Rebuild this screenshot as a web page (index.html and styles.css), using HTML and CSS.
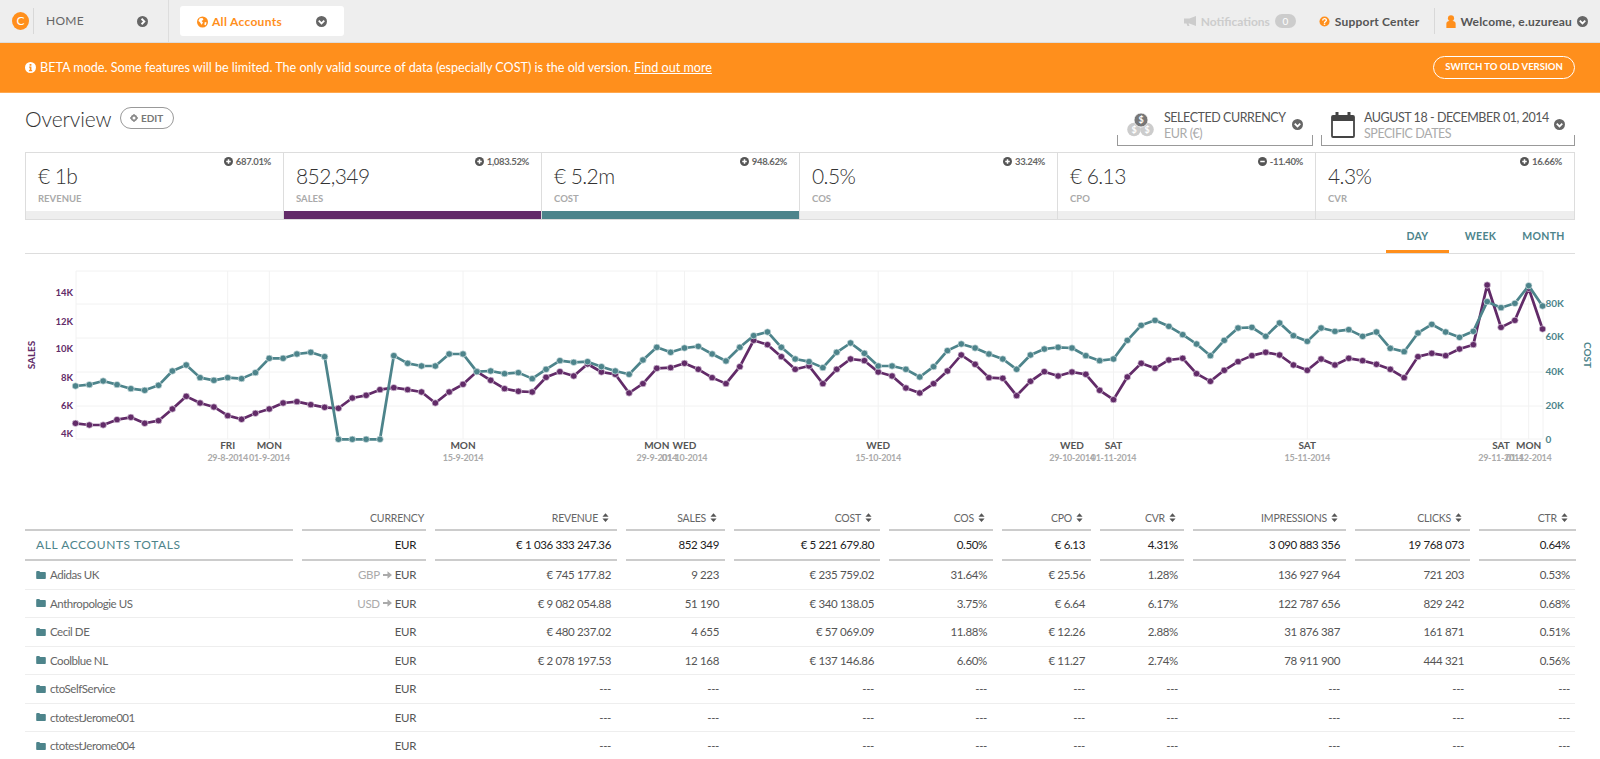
FILE: index.html
```html
<!DOCTYPE html>
<html lang="en">
<head>
<meta charset="utf-8">
<title>Overview</title>
<link rel="stylesheet" href="styles.css">
</head>
<body>
<svg class="defs" aria-hidden="true">
  <symbol id="i-down" viewBox="0 0 12 12"><circle cx="6" cy="6" r="6"/><path d="M3 5l3 3 3-3" fill="none" stroke="#fff" stroke-width="2"/></symbol>
  <symbol id="i-right" viewBox="0 0 12 12"><circle cx="6" cy="6" r="6"/><path d="M5 3l3 3-3 3" fill="none" stroke="#fff" stroke-width="2"/></symbol>
  <symbol id="i-plus" viewBox="0 0 12 12"><circle cx="6" cy="6" r="6"/><path d="M6 3v6M3 6h6" stroke="#fff" stroke-width="2"/></symbol>
  <symbol id="i-minus" viewBox="0 0 12 12"><circle cx="6" cy="6" r="6"/><path d="M3 6h6" stroke="#fff" stroke-width="2"/></symbol>
  <symbol id="i-folder" viewBox="0 0 12 10"><path d="M0 1.2C0 .5.5 0 1.2 0h2.600l1.200 1.400h5.800c.6 0 1.200.5 1.200 1.200v6.200c0 .7-.6 1.200-1.200 1.200H1.200C.5 10 0 9.500 0 8.800z"/></symbol>
  <symbol id="i-sort" viewBox="0 0 8 10"><path d="M4 0l3.500 4H.5zM4 10L.5 6h7z"/></symbol>
  <symbol id="i-arrow" viewBox="0 0 12 10"><path d="M0 3.800h6V0l6 5-6 5V6.200H0z"/></symbol>
</svg>

<header class="topbar">
  <div class="home">
    <span class="logo">C</span>
    <span class="home-label">HOME</span>
    <svg class="ic ic-chev"><use href="#i-right"/></svg>
  </div>
  <div class="tab">
    <svg class="ic ic-globe" viewBox="0 0 12 12"><circle cx="6" cy="6" r="6"/><path d="M3 2l3-.5 1 2-2 1.500 1.500 1.500L5 9 3 6 1.500 5zM8.500 6l2 .5L9.500 9.500 8 9z" fill="#fff"/></svg>
    <span class="tab-label">All Accounts</span>
    <svg class="ic ic-chev"><use href="#i-down"/></svg>
  </div>
  <nav class="user-nav">
    <svg class="ic ic-horn" viewBox="0 0 12 10"><path d="M12 0v10L5.500 7.500H4.500L5.500 10H3.500L2.500 7.500H0v-5h5.500z"/></svg>
    <span class="notif">Notifications</span>
    <span class="badge">0</span>
    <svg class="ic ic-help" viewBox="0 0 12 12"><circle cx="6" cy="6" r="5.500"/><path d="M4 4.800c0-2.600 4-2.600 4-.3 0 1.500-2 1.500-2 3" fill="none" stroke="#fff" stroke-width="1.500"/><path d="M5.200 8.200h1.600v1.500H5.200z" fill="#fff"/></svg>
    <span class="nav-text support">Support Center</span>
    <span class="nav-sep"></span>
    <svg class="ic ic-user" viewBox="0 0 10 14"><circle cx="5" cy="3.500" r="3.300"/><path d="M0 14V9.500C0 7.500 1.500 6.500 3 6.500h4c1.500 0 3 1 3 3V14z"/></svg>
    <span class="nav-text">Welcome, e.uzureau</span>
    <svg class="ic ic-chev"><use href="#i-down"/></svg>
  </nav>
</header>

<section class="banner">
  <p class="banner-text"><svg class="ic-info" viewBox="0 0 12 12"><circle cx="6" cy="6" r="6"/><path d="M5 2.200h2v1.800H5zM4.500 5h2.500v3.800h.8V10H4.300V8.800h.9V6.200h-.7z" fill="#ff8f1c"/></svg>BETA mode. Some features will be limited. The only valid source of data (especially COST) is the old version. <a href="#">Find out more</a></p>
  <a class="switch-btn" href="#">SWITCH TO OLD VERSION</a>
</section>

<section class="title-row">
  <div class="title-left">
    <h1>Overview</h1>
    <button class="edit-btn"><svg class="ic ic-cog" viewBox="0 0 12 12"><circle cx="6" cy="6" r="3.500" fill="none" stroke="#8a8a8a" stroke-width="2.500"/><path d="M5 0h2v2.500H5zM5 9.500h2V12H5zM0 5h2.500v2H0zM9.500 5H12v2H9.500z" fill="#8a8a8a"/></svg>EDIT</button>
  </div>
  <div class="pickers">
    <div class="picker picker-cur">
      <svg class="picker-icon coins" viewBox="0 0 28 24"><circle cx="7" cy="16.500" r="6.800" fill="#ccc"/><circle cx="20" cy="16.500" r="6.800" fill="#ccc"/><circle cx="14" cy="7" r="7" fill="#777" stroke="#fff" stroke-width=".8"/><text x="14" y="10.200" class="coin-t">$</text><text x="7" y="20" class="coin-t">$</text><text x="20" y="20" class="coin-t">$</text></svg>
      <div class="picker-text"><span class="picker-main">SELECTED CURRENCY</span><span class="picker-sub">EUR (€)</span></div>
      <svg class="ic ic-chev"><use href="#i-down"/></svg>
    </div>
    <div class="picker picker-date">
      <svg class="picker-icon cal" viewBox="0 0 24 26"><rect x="1" y="4" width="22" height="21" rx="1" fill="none" stroke="#444" stroke-width="1.800"/><path d="M1 4h22v5H1zM4.500 0h3v5h-3zM16.500 0h3v5h-3z" fill="#444"/></svg>
      <div class="picker-text"><span class="picker-main">AUGUST 18 - DECEMBER 01, 2014</span><span class="picker-sub">SPECIFIC DATES</span></div>
      <svg class="ic ic-chev"><use href="#i-down"/></svg>
    </div>
  </div>
</section>

<section class="kpis">
  <div class="kpi">
    <div class="delta"><svg class="ic ic-delta"><use href="#i-plus"/></svg>687.01%</div>
    <div class="kpi-val">€ 1b</div><div class="kpi-label">REVENUE</div><div class="kpi-bar"></div>
  </div>
  <div class="kpi">
    <div class="delta"><svg class="ic ic-delta"><use href="#i-plus"/></svg>1,083.52%</div>
    <div class="kpi-val">852,349</div><div class="kpi-label">SALES</div><div class="kpi-bar bar-sales"></div>
  </div>
  <div class="kpi">
    <div class="delta"><svg class="ic ic-delta"><use href="#i-plus"/></svg>948.62%</div>
    <div class="kpi-val">€ 5.2m</div><div class="kpi-label">COST</div><div class="kpi-bar bar-cost"></div>
  </div>
  <div class="kpi">
    <div class="delta"><svg class="ic ic-delta"><use href="#i-plus"/></svg>33.24%</div>
    <div class="kpi-val">0.5%</div><div class="kpi-label">COS</div><div class="kpi-bar"></div>
  </div>
  <div class="kpi">
    <div class="delta"><svg class="ic ic-delta"><use href="#i-minus"/></svg>-11.40%</div>
    <div class="kpi-val">€ 6.13</div><div class="kpi-label">CPO</div><div class="kpi-bar"></div>
  </div>
  <div class="kpi">
    <div class="delta"><svg class="ic ic-delta"><use href="#i-plus"/></svg>16.66%</div>
    <div class="kpi-val">4.3%</div><div class="kpi-label">CVR</div><div class="kpi-bar"></div>
  </div>
</section>

<section class="tabs">
  <span class="period active">DAY</span><span class="period">WEEK</span><span class="period">MONTH</span>
</section>

<svg class="chart" viewBox="0 254 1600 246">
  <defs>
    <marker id="dot-p" viewBox="0 0 10 10" refX="5" refY="5" markerWidth="3" markerHeight="3"><circle cx="5" cy="5" r="4" fill="#622b68" stroke="#e6dcea" stroke-width=".8"/></marker>
    <marker id="dot-t" viewBox="0 0 10 10" refX="5" refY="5" markerWidth="3" markerHeight="3"><circle cx="5" cy="5" r="4" fill="#4d848b" stroke="#dfeaeb" stroke-width=".8"/></marker>
  </defs>
  <path class="grid" d="M76 271H1543M76 304H1543M76 338H1543M76 372H1543M76 406H1543M76 439H1543M76 271V439M1543 271V439M227.700 271V439M269.300 271V439M463 271V439M656.800 271V439M684.500 271V439M878.200 271V439M1072 271V439M1113.500 271V439M1307.300 271V439M1501 271V439M1528.700 271V439"/>
  <g class="axis-l">
    <text x="73" y="295.500">14K</text><text x="73" y="324.500">12K</text><text x="73" y="352">10K</text><text x="73" y="380.500">8K</text><text x="73" y="408.500">6K</text><text x="73" y="436.500">4K</text>
  </g>
  <g class="axis-r">
    <text x="1545.500" y="306.500">80K</text><text x="1545.500" y="340">60K</text><text x="1545.500" y="374.500">40K</text><text x="1545.500" y="408.500">20K</text><text x="1545.500" y="442.500">0</text>
  </g>
  <text class="axis-title sales" transform="translate(34.500 355) rotate(-90)">SALES</text>
  <text class="axis-title cost" transform="translate(1584 355) rotate(90)">COST</text>
  <g class="xday">
    <text x="227.700" y="448.500">FRI</text><text x="269.300" y="448.500">MON</text><text x="463" y="448.500">MON</text><text x="656.800" y="448.500">MON</text><text x="684.500" y="448.500">WED</text><text x="878.200" y="448.500">WED</text><text x="1072" y="448.500">WED</text><text x="1113.500" y="448.500">SAT</text><text x="1307.300" y="448.500">SAT</text><text x="1501" y="448.500">SAT</text><text x="1528.700" y="448.500">MON</text>
  </g>
  <g class="xdate">
    <text x="227.700" y="460.500">29-8-2014</text><text x="269.300" y="460.500">01-9-2014</text><text x="463" y="460.500">15-9-2014</text><text x="656.800" y="460.500">29-9-2014</text><text x="684.500" y="460.500">01-10-2014</text><text x="878.200" y="460.500">15-10-2014</text><text x="1072" y="460.500">29-10-2014</text><text x="1113.500" y="460.500">01-11-2014</text><text x="1307.300" y="460.500">15-11-2014</text><text x="1501" y="460.500">29-11-2014</text><text x="1528.700" y="460.500">01-12-2014</text>
  </g>
  <g transform="translate(75.500 260) scale(.346 .3333)">
    <polyline class="line line-sales" points="0,490 40,495 80,495 120,479 160,472 200,490 240,482 280,447 320,409 360,429 400,441 440,467 480,478 520,460 560,447 600,429 640,425 680,434 720,442 760,445 800,414 840,406 880,389 920,383 960,389 1000,396 1040,429 1080,396 1120,373 1160,335 1200,361 1240,386 1280,394 1320,396 1360,352 1400,335 1440,348 1480,312 1520,336 1560,343 1600,399 1640,371 1680,325 1720,323 1760,310 1800,328 1840,353 1880,371 1920,320 1960,241 2000,254 2040,290 2080,328 2120,318 2160,371 2200,328 2240,297 2280,302 2320,336 2360,348 2400,384 2440,399 2480,371 2520,333 2560,285 2600,313 2640,353 2680,355 2720,407 2760,364 2800,335 2840,348 2880,336 2920,343 2960,391 3000,419 3040,351 3080,310 3120,325 3160,300 3200,295 3240,341 3280,364 3320,331 3360,305 3400,287 3440,277 3480,285 3520,315 3560,331 3600,297 3640,315 3680,295 3720,302 3760,313 3800,328 3840,353 3880,290 3920,280 3960,287 4000,267 4040,254 4080,75 4120,202 4160,181 4200,85 4240,207"/>
    <polyline class="line line-cost" points="0,378 40,374 80,363 120,374 160,386 200,391 240,376 280,333 320,315 360,353 400,361 440,353 480,356 520,338 560,295 600,295 640,282 680,277 720,290 760,538 800,538 840,538 880,538 920,287 960,310 1000,318 1040,318 1080,282 1120,282 1160,335 1200,333 1240,341 1280,338 1320,356 1360,328 1400,302 1440,307 1480,305 1520,320 1560,333 1600,343 1640,300 1680,262 1720,277 1760,264 1800,259 1840,282 1880,303 1920,262 1960,227 2000,216 2040,262 2080,297 2120,305 2160,323 2200,277 2240,249 2280,280 2320,318 2360,318 2400,328 2440,351 2480,320 2520,272 2560,252 2600,264 2640,282 2680,297 2720,328 2760,285 2800,267 2840,262 2880,264 2920,287 2960,302 3000,297 3040,241 3080,196 3120,181 3160,199 3200,224 3240,252 3280,287 3320,241 3360,204 3400,202 3440,229 3480,189 3520,227 3560,244 3600,204 3640,214 3680,209 3720,229 3760,216 3800,265 3840,275 3880,219 3920,193 3960,216 4000,232 4040,214 4080,125 4120,143 4160,130 4200,77 4240,138"/>
  </g>
</svg>

<section class="table">
  <div class="row row-head">
    <div></div><div class="c c-cur">CURRENCY</div>
    <div class="c">REVENUE<svg class="ic-sort"><use href="#i-sort"/></svg></div>
    <div class="c">SALES<svg class="ic-sort"><use href="#i-sort"/></svg></div>
    <div class="c">COST<svg class="ic-sort"><use href="#i-sort"/></svg></div>
    <div class="c">COS<svg class="ic-sort"><use href="#i-sort"/></svg></div>
    <div class="c">CPO<svg class="ic-sort"><use href="#i-sort"/></svg></div>
    <div class="c">CVR<svg class="ic-sort"><use href="#i-sort"/></svg></div>
    <div class="c">IMPRESSIONS<svg class="ic-sort"><use href="#i-sort"/></svg></div>
    <div class="c">CLICKS<svg class="ic-sort"><use href="#i-sort"/></svg></div>
    <div class="c">CTR<svg class="ic-sort"><use href="#i-sort"/></svg></div>
  </div>
  <div class="row row-total">
    <div class="name total-name">ALL ACCOUNTS TOTALS</div><div class="c cur">EUR</div><div class="c">€ 1 036 333 247.36</div><div class="c">852 349</div><div class="c">€ 5 221 679.80</div><div class="c">0.50%</div><div class="c">€ 6.13</div><div class="c">4.31%</div><div class="c">3 090 883 356</div><div class="c">19 768 073</div><div class="c">0.64%</div>
  </div>
  <div class="row row-data">
    <div class="name"><svg class="ic-folder"><use href="#i-folder"/></svg>Adidas UK</div><div class="c cur"><span class="from">GBP</span><svg class="ic-arrow"><use href="#i-arrow"/></svg>EUR</div><div class="c">€ 745 177.82</div><div class="c">9 223</div><div class="c">€ 235 759.02</div><div class="c">31.64%</div><div class="c">€ 25.56</div><div class="c">1.28%</div><div class="c">136 927 964</div><div class="c">721 203</div><div class="c">0.53%</div>
  </div>
  <div class="row row-data">
    <div class="name"><svg class="ic-folder"><use href="#i-folder"/></svg>Anthropologie US</div><div class="c cur"><span class="from">USD</span><svg class="ic-arrow"><use href="#i-arrow"/></svg>EUR</div><div class="c">€ 9 082 054.88</div><div class="c">51 190</div><div class="c">€ 340 138.05</div><div class="c">3.75%</div><div class="c">€ 6.64</div><div class="c">6.17%</div><div class="c">122 787 656</div><div class="c">829 242</div><div class="c">0.68%</div>
  </div>
  <div class="row row-data">
    <div class="name"><svg class="ic-folder"><use href="#i-folder"/></svg>Cecil DE</div><div class="c cur">EUR</div><div class="c">€ 480 237.02</div><div class="c">4 655</div><div class="c">€ 57 069.09</div><div class="c">11.88%</div><div class="c">€ 12.26</div><div class="c">2.88%</div><div class="c">31 876 387</div><div class="c">161 871</div><div class="c">0.51%</div>
  </div>
  <div class="row row-data">
    <div class="name"><svg class="ic-folder"><use href="#i-folder"/></svg>Coolblue NL</div><div class="c cur">EUR</div><div class="c">€ 2 078 197.53</div><div class="c">12 168</div><div class="c">€ 137 146.86</div><div class="c">6.60%</div><div class="c">€ 11.27</div><div class="c">2.74%</div><div class="c">78 911 900</div><div class="c">444 321</div><div class="c">0.56%</div>
  </div>
  <div class="row row-data">
    <div class="name"><svg class="ic-folder"><use href="#i-folder"/></svg>ctoSelfService</div><div class="c cur">EUR</div><div class="c">---</div><div class="c">---</div><div class="c">---</div><div class="c">---</div><div class="c">---</div><div class="c">---</div><div class="c">---</div><div class="c">---</div><div class="c">---</div>
  </div>
  <div class="row row-data">
    <div class="name"><svg class="ic-folder"><use href="#i-folder"/></svg>ctotestJerome001</div><div class="c cur">EUR</div><div class="c">---</div><div class="c">---</div><div class="c">---</div><div class="c">---</div><div class="c">---</div><div class="c">---</div><div class="c">---</div><div class="c">---</div><div class="c">---</div>
  </div>
  <div class="row row-data">
    <div class="name"><svg class="ic-folder"><use href="#i-folder"/></svg>ctotestJerome004</div><div class="c cur">EUR</div><div class="c">---</div><div class="c">---</div><div class="c">---</div><div class="c">---</div><div class="c">---</div><div class="c">---</div><div class="c">---</div><div class="c">---</div><div class="c">---</div>
  </div>
</section>
</body>
</html>
```

FILE: styles.css
```css
* { box-sizing: border-box; }
html, body { margin: 0; height: 100vh; overflow: hidden; }
body { font-family: Lato, "Liberation Sans", sans-serif; color: #444; background: #fff; font-size: 12px; }
.defs { position: absolute; width: 0; height: 0; }
.ic { display: block; flex: none; }
.ic-chev { width: 11px; height: 11px; fill: #666; }

.topbar { display: flex; align-items: center; height: 43px; background: #eee; border-bottom: 1px solid #ddd; }
.home { display: flex; align-items: center; width: 169px; height: 42px; padding-left: 12px; border-right: 1px solid #ddd; }
.logo { width: 17px; height: 18px; border-radius: 50%; background: #ff8f1c; color: #fff; font-size: 12px; line-height: 18px; text-align: center; }
.home-label { margin-left: 4px; padding-left: 12px; border-left: 1px solid #d8d8d8; height: 26px; line-height: 26px; width: 104px; font-size: 12px; letter-spacing: .3px; color: #666; }
.tab { display: flex; align-items: center; width: 164px; height: 30px; margin-left: 11px; padding: 1px 17px 0; background: #fff; border-radius: 3px; }
.ic-globe { width: 11px; height: 12px; fill: #ff8f1c; }
.tab-label { margin-left: 4px; width: 108px; color: #ff8f1c; font-weight: 700; font-size: 12px; letter-spacing: .3px; }
.user-nav { display: flex; align-items: center; margin-left: auto; padding-right: 12px; height: 42px; }
.ic-horn { width: 12px; height: 10px; fill: #ccc; }
.notif { margin-left: 5px; color: #ccc; font-weight: 700; font-size: 12px; }
.badge { margin-left: 5px; width: 21px; height: 14px; border-radius: 7px; background: #ccc; color: #fff; font-size: 10px; line-height: 14px; text-align: center; }
.ic-help { width: 11px; height: 11px; margin-left: 23px; fill: #ff8f1c; }
.nav-text { margin-left: 5px; color: #555; font-weight: 700; font-size: 12px; letter-spacing: .2px; }
.nav-sep { width: 1px; height: 26px; margin: 0 11px 0 14px; background: #d8d8d8; }
.ic-user { width: 10px; height: 13px; fill: #ff8f1c; }
.user-nav .ic-chev { margin-left: 5px; }

.banner { display: flex; align-items: center; justify-content: space-between; height: 50px; padding: 0 25px; background: #ff8f1c; border-bottom: 1px solid #ffa84f; color: #fff; }
.banner-text { margin: 0; font-size: 12.600px; }
.banner-text a { color: #fff; }
.ic-info { display: inline-block; width: 11px; height: 11px; margin-right: 4px; vertical-align: -1px; fill: #fff; }
.switch-btn { width: 142px; height: 23px; border: 1.5px solid #fff; border-radius: 12px; color: #fff; font-size: 9.500px; font-weight: 700; line-height: 20px; text-align: center; text-decoration: none; }

.title-row { display: flex; justify-content: space-between; height: 59px; padding: 0 25px; }
.title-left { display: flex; align-items: center; height: 50px; }
h1 { margin: 0; font-size: 21px; font-weight: 300; letter-spacing: -.1px; color: #333; }
.edit-btn { display: flex; align-items: center; justify-content: center; width: 54px; height: 22px; margin-left: 8px; padding: 0; border: 1.5px solid #999; border-radius: 11px; background: #fff; color: #777; font: 700 10px Lato, sans-serif; }
.ic-cog { width: 8px; height: 8px; margin-right: 3px; }
.pickers { display: flex; gap: 8px; align-self: flex-end; margin-bottom: 6px; }
.picker { position: relative; display: flex; align-items: center; height: 36px; padding: 0 10px 6px; border-bottom: 1px solid #999; }
.picker::before, .picker::after { content: ""; position: absolute; bottom: 0; width: 1px; height: 10px; background: #999; }
.picker::before { left: 0; }
.picker::after { right: 0; }
.picker-cur { width: 196px; }
.picker-date { width: 254px; }
.picker-icon { flex: none; }
.coins { width: 28px; height: 24px; }
.cal { width: 24px; height: 26px; }
.coin-t { font: 700 9px Lato, sans-serif; fill: #fff; text-anchor: middle; }
.picker-text { display: flex; flex-direction: column; flex: 1; margin-left: 9px; padding-top: 3px; line-height: 16px; font-size: 12.500px; letter-spacing: -.45px; white-space: nowrap; }
.picker-main { color: #555; }
.picker-sub { color: #aaa; }

.kpis { display: grid; grid-template-columns: repeat(6, 1fr); margin: 0 25px; height: 68px; border: 1px solid #ddd; }
.kpi { position: relative; padding-left: 12px; border-right: 1px solid #ddd; }
.kpi:last-child { border-right: 0; }
.delta { display: flex; align-items: center; justify-content: flex-end; gap: 3px; height: 12px; margin-top: 2px; padding-right: 12px; font-size: 9.500px; letter-spacing: -.35px; font-weight: 700; color: #666; }
.ic-delta { width: 9px; height: 9px; fill: #555; }
.kpi-val { height: 18px; font-size: 21px; line-height: 18px; letter-spacing: -.6px; font-weight: 300; color: #333; }
.kpi-label { margin-top: 8px; font-size: 9.500px; line-height: 12px; font-weight: 700; color: #aaa; }
.kpi-bar { position: absolute; left: 0; right: 0; bottom: 0; height: 8px; background: #eee; }
.bar-sales { background: #622b68; }
.bar-cost { background: #4d848b; }

.tabs { display: flex; justify-content: flex-end; height: 34px; margin: 0 25px; border-bottom: 1px solid #ddd; }
.period { width: 63px; height: 33px; line-height: 32px; text-align: center; font-size: 10.500px; font-weight: 700; color: #4d848b; letter-spacing: .3px; }
.period.active { border-bottom: 3px solid #ff8f1c; }

.chart { display: block; width: 1600px; height: 246px; }
.grid { fill: none; stroke: #f2f2f2; stroke-width: 1; }
.axis-l text { font: 700 9.500px Lato, sans-serif; fill: #622b68; text-anchor: end; }
.axis-r text { font: 700 10px Lato, sans-serif; fill: #4d848b; }
.axis-title { font: 700 10px Lato, sans-serif; text-anchor: middle; }
.axis-title.sales { fill: #622b68; }
.axis-title.cost { fill: #4d848b; }
.xday text { font: 700 10px Lato, sans-serif; fill: #555; text-anchor: middle; }
.xdate text { font: 700 9px Lato, sans-serif; letter-spacing: -.3px; fill: #aaa; text-anchor: middle; }
.line { fill: none; stroke-width: 8; stroke-linejoin: round; }
.line-sales { stroke: #622b68; marker: url(#dot-p); }
.line-cost { stroke: #4d848b; marker: url(#dot-t); }

.table { padding: 0 25px; }
.row { display: grid; grid-template-columns: 268px 124px 182px 99px 146px 104px 89px 84px 153px 115px 97px; column-gap: 9px; align-items: center; white-space: nowrap; }
.c { display: flex; align-items: center; justify-content: flex-end; padding-right: 6px; color: #555; font-size: 11.500px; letter-spacing: -.35px; }
.row-head { height: 31px; }
.row-head > div { height: 31px; padding-top: 6px; border-bottom: 2px solid #ccc; color: #666; font-size: 10.500px; letter-spacing: -.2px; padding-right: 8px; }
.row-head .c-cur { padding-right: 2px; }
.ic-sort { width: 7px; height: 9px; margin-left: 4px; fill: #555; }
.row-total { height: 30px; }
.row-total > div { height: 30px; line-height: 28px; border-bottom: 2px solid #ccc; color: #222; }
.row-total .total-name { padding-left: 11px; color: #4d848b; font-size: 12px; letter-spacing: .6px; }
.row-data { height: 28.500px; border-bottom: 1.500px solid #eee; }
.name { display: flex; align-items: center; padding-left: 11px; color: #666; font-size: 11.500px; letter-spacing: -.45px; }
.ic-folder { width: 10px; height: 8px; margin-right: 4px; fill: #4d848b; }
.cur { padding-right: 10px; }
.from { color: #aaa; }
.ic-arrow { width: 9px; height: 8px; margin: 0 3px; fill: #aaa; }
```
